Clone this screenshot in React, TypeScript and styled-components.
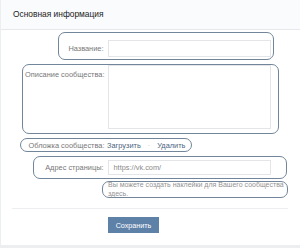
import React from 'react';
import styled, { createGlobalStyle } from 'styled-components';

const GlobalStyle = createGlobalStyle`
  * { box-sizing: border-box; }
  html, body {
    margin: 0;
    padding: 0;
    background: #edeef0;
    font-family: "Liberation Sans", Arial, sans-serif;
  }
`;

const Page = styled.div`
  width: 300px;
  height: 248px;
  padding-left: 1px;
  overflow: hidden;
`;

const Card = styled.div`
  background: #fff;
  height: 245px;
  overflow: hidden;
`;

const Header = styled.div`
  height: 30px;
  padding: 0 12px 1px;
  display: flex;
  align-items: center;
  background: #fafbfc;
  border-bottom: 1px solid #e7e8ec;
  font-size: 8.4px;
  color: #222;
`;

const Body = styled.div`
  display: flex;
  flex-direction: column;
  padding-top: 1px;
`;

const Row = styled.div<{ $left: number; $width: number; $height: number; $top: number; $align?: string; $padTop?: number }>`
  margin-left: ${(p) => p.$left - 1}px;
  margin-top: ${(p) => p.$top}px;
  width: ${(p) => p.$width}px;
  height: ${(p) => p.$height}px;
  padding-top: ${(p) => p.$padTop || 0}px;
  border: 1.5px solid #71869b;
  border-radius: 7px;
  display: flex;
  align-items: ${(p) => p.$align || 'center'};
  font-size: 7.4px;
  color: #777;
`;

const Label = styled.div<{ $width: number; $right?: boolean; $pad?: number; $top?: number }>`
  width: ${(p) => p.$width}px;
  flex-shrink: 0;
  text-align: ${(p) => (p.$right ? 'right' : 'left')};
  padding-left: ${(p) => p.$pad || 0}px;
  padding-right: ${(p) => (p.$right ? 4 : 0)}px;
  margin-top: ${(p) => p.$top || 0}px;
`;

const Field = styled.div<{ $height: number }>`
  width: 163px;
  height: ${(p) => p.$height}px;
  border: 1px solid #e3e5e8;
  background: #fff;
  padding: 0 5px;
  display: flex;
  align-items: center;
  color: #8a8a8a;
  font-size: 7.4px;
`;

const Link = styled.span`
  color: #4b6480;
`;

const Dot = styled.span`
  color: #b8bcc2;
  margin: 0 7px;
`;

const Hint = styled.div`
  padding-left: 5px;
  line-height: 9.6px;
  color: #939393;
  font-size: 7px;
  white-space: nowrap;
  margin-top: -2.5px;
`;

const Separator = styled.div`
  margin: 10px 11px 0;
  border-top: 1px solid #eceef1;
  width: 276px;
`;

const Button = styled.div`
  margin: 8px 0 0 107px;
  width: 51px;
  height: 16px;
  background: #5e81a8;
  color: #fff;
  font-size: 7.2px;
  display: flex;
  align-items: center;
  justify-content: center;
`;

export default function App() {
  return (
    <Page>
      <GlobalStyle />
      <Card>
        <Header>Основная информация</Header>
        <Body>
          <Row $left={58} $width={216} $height={28} $top={1} $align="flex-start" $padTop={6.5}>
            <Label $width={48.5} $right $top={4.5}>Название:</Label>
            <Field $height={17} />
          </Row>
          <Row $left={22} $width={257} $height={70} $top={4} $align="flex-start">
            <Label $width={84.5} $pad={2} $top={5}>Описание сообщества:</Label>
            <Field $height={64} />
          </Row>
          <Row $left={20} $width={172} $height={14} $top={4}>
            <Label $width={86} $pad={7.5}>Обложка сообщества:</Label>
            <Link>Загрузить</Link>
            <Dot>·</Dot>
            <Link>Удалить</Link>
          </Row>
          <Row $left={33} $width={254} $height={23} $top={4}>
            <Label $width={73.5} $right>Адрес страницы:</Label>
            <Field $height={15}>https://vk.com/</Field>
          </Row>
          <Row $left={102} $width={186} $height={17} $top={2} $align="flex-start">
            <Hint>
              Вы можете создать наклейки для Вашего сообщества
              <br />
              здесь.
            </Hint>
          </Row>
          <Separator />
          <Button>Сохранить</Button>
        </Body>
      </Card>
    </Page>
  );
}
